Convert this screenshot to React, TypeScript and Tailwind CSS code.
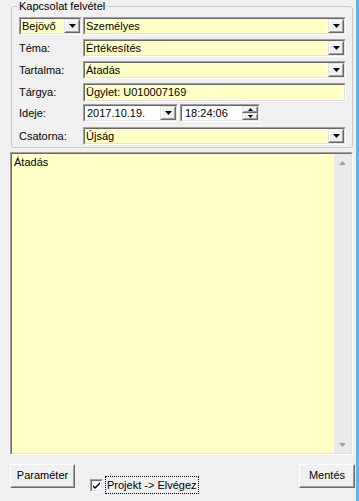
import React from "react";

const sunkenOuter = "border border-t-[#a0a0a0] border-l-[#a0a0a0] border-b-white border-r-white";
const sunkenInner = "border border-t-[#696969] border-l-[#696969] border-b-[#e3e3e3] border-r-[#e3e3e3]";
const raisedOuter = "border border-t-[#e3e3e3] border-l-[#e3e3e3] border-b-[#696969] border-r-[#696969]";
const raisedInner = "border border-t-white border-l-white border-b-[#a0a0a0] border-r-[#a0a0a0]";

function Tri({ up = false, color = "#000" }: { up?: boolean; color?: string }) {
  return (
    <svg width="7" height="4" viewBox="0 0 7 4">
      {up ? <path d="M3.5 0 L7 4 L0 4 Z" fill={color} /> : <path d="M0 0 L7 0 L3.5 4 Z" fill={color} />}
    </svg>
  );
}

function DropBtn() {
  return (
    <div className={`${raisedOuter} w-[16px] bg-[#f0f0f0]`}>
      <div className={`${raisedInner} flex h-full w-full items-center justify-center`}>
        <Tri />
      </div>
    </div>
  );
}

function Combo({ value, className = "" }: { value: string; className?: string }) {
  return (
    <div className={`${sunkenOuter} flex h-[18px] ${className}`}>
      <div className={`${sunkenInner} flex flex-1 bg-[#ffffc6]`}>
        <span className="flex-1 overflow-hidden whitespace-nowrap pl-[1px] leading-[14px]">{value}</span>
        <DropBtn />
      </div>
    </div>
  );
}

function Label({ children }: { children: React.ReactNode }) {
  return <div className="w-[64px] leading-[18px]">{children}</div>;
}

function Spinner() {
  return (
    <div className="flex w-[16px] flex-col">
      <div className={`${raisedOuter} h-[7px] bg-[#f0f0f0]`}>
        <div className={`${raisedInner} flex h-full items-center justify-center`}>
          <svg width="5" height="3" viewBox="0 0 5 3"><path d="M2.5 0 L5 3 L0 3 Z" fill="#000" /></svg>
        </div>
      </div>
      <div className={`${raisedOuter} h-[7px] bg-[#f0f0f0]`}>
        <div className={`${raisedInner} flex h-full items-center justify-center`}>
          <svg width="5" height="3" viewBox="0 0 5 3"><path d="M0 0 L5 0 L2.5 3 Z" fill="#000" /></svg>
        </div>
      </div>
    </div>
  );
}

function Button({ children, className = "" }: { children: React.ReactNode; className?: string }) {
  return (
    <div className={`border border-t-white border-l-white border-b-[#696969] border-r-[#696969] bg-[#f0f0f0] ${className}`}>
      <div className="flex h-full w-full items-center justify-center border border-t-[#f0f0f0] border-l-[#f0f0f0] border-b-[#a0a0a0] border-r-[#a0a0a0] pb-[2px]">
        {children}
      </div>
    </div>
  );
}

export default function App() {
  return (
    <div
      className="flex h-[501px] w-[359px] overflow-hidden bg-[#f0f0f0] text-[11px] text-black"
      style={{ fontFamily: '"Liberation Sans", Arial, sans-serif' }}
    >
      <div className="flex flex-1 flex-col">
        <fieldset className="ml-[11px] w-[342px] rounded-[3px] border border-[#c8c8c8] pb-[2px] pl-[7px] pr-[6px]">
          <legend className="ml-[-2px] px-[2px] leading-[13px]">Kapcsolat felvétel</legend>
          <div className="mt-[4px] flex gap-[1px]">
            <Combo value="Bejövő" className="w-[63px]" />
            <Combo value="Személyes" className="flex-1" />
          </div>
          <div className="mt-[4px] flex">
            <Label>Téma:</Label>
            <Combo value="Értékesítés" className="flex-1" />
          </div>
          <div className="mt-[4px] flex">
            <Label>Tartalma:</Label>
            <Combo value="Átadás" className="flex-1" />
          </div>
          <div className="mt-[4px] flex">
            <Label>Tárgya:</Label>
            <div className={`${sunkenOuter} h-[19px] flex-1`}>
              <div className={`${sunkenInner} h-full bg-[#ffffc6] pl-[1px] leading-[15px]`}>Ügylet: U010007169</div>
            </div>
          </div>
          <div className="mt-[2px] flex">
            <Label>Ideje:</Label>
            <div className="flex gap-[2px]">
              <div className={`${sunkenOuter} flex h-[18px] w-[95px]`}>
                <div className={`${sunkenInner} flex flex-1 bg-white`}>
                  <span className="flex-1 pl-[2px] leading-[14px]">2017.10.19.</span>
                  <DropBtn />
                </div>
              </div>
              <div className={`${sunkenOuter} flex h-[18px] w-[80px]`}>
                <div className={`${sunkenInner} flex flex-1 bg-white`}>
                  <span className="flex-1 pl-[3px] leading-[14px]">18:24:06</span>
                  <Spinner />
                </div>
              </div>
            </div>
          </div>
          <div className="mt-[5px] flex">
            <Label>Csatorna:</Label>
            <Combo value="Újság" className="flex-1" />
          </div>
        </fieldset>

        <div className={`${sunkenOuter} ml-[10px] mt-[4px] flex h-[303px] w-[343px]`}>
          <div className={`${sunkenInner} flex flex-1 bg-[#ffffc6]`}>
            <div className="flex-1 pl-[2px] pt-[2px] leading-[13px]">Átadás</div>
            <div className="flex w-[17px] flex-col bg-[#eaeaea]">
              <div className="flex h-[17px] items-center justify-center"><Tri up color="#a3a3a3" /></div>
              <div className="flex-1" />
              <div className="flex h-[17px] items-center justify-center"><Tri color="#a3a3a3" /></div>
            </div>
          </div>
        </div>

        <div className="flex items-start pl-[10px] pt-[9px]">
          <Button className="h-[24px] w-[65px]">Paraméter</Button>
          <div className="ml-[15px] mt-[12px] flex items-center">
            <div className={`${sunkenOuter} h-[13px] w-[13px]`}>
              <div className={`${sunkenInner} flex h-full w-full items-center justify-center bg-white`}>
                <svg width="7" height="7" viewBox="0 0 7 7">
                  <path d="M0 3 L2 5 L7 0 L7 2 L2 7 L0 5 Z" fill="#000" />
                </svg>
              </div>
            </div>
            <div className="ml-[2px] border border-dotted border-black px-[1px] leading-[16px]">Projekt -&gt; Elvégez</div>
          </div>
          <div className="flex-1" />
          <Button className="h-[24px] w-[56px]">Mentés</Button>
        </div>
      </div>
      <div className="w-[1px] bg-[#f0f0f0]" />
      <div className="w-[3px] bg-[#62b2e8]" />
    </div>
  );
}
